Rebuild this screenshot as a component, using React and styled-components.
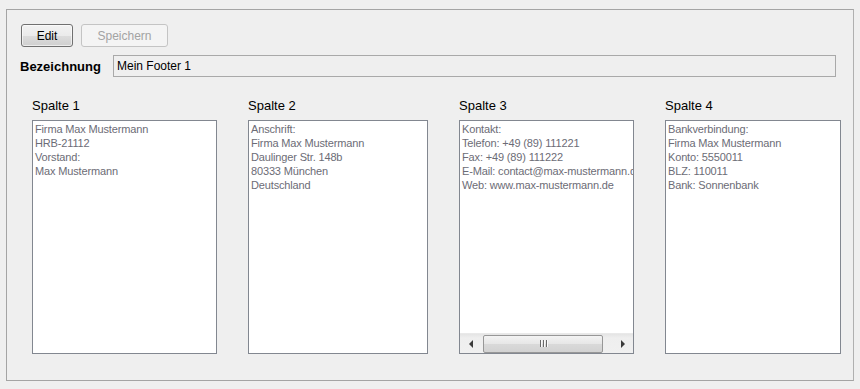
import React from "react";
import styled, { createGlobalStyle } from "styled-components";

const Global = createGlobalStyle`
  html, body { margin: 0; padding: 0; background: #efefef; }
  body { font-family: "Liberation Sans", Arial, sans-serif; }
  * { box-sizing: border-box; }
`;

const Page = styled.div`
  width: 860px;
  height: 389px;
  padding: 9px 6px 0 6px;
  background: #efefef;
`;

const Panel = styled.div`
  width: 848px;
  height: 372px;
  border: 1px solid #a4a4a4;
  border-right-color: #b0b0b0;
  padding: 14px 0 0 13px;
`;

const ButtonRow = styled.div`
  display: flex;
  gap: 8px;
  padding-left: 1px;
`;

const Button = styled.button`
  height: 23px;
  width: ${(p) => p.$w}px;
  padding: 0;
  font-family: "Liberation Sans", Arial, sans-serif;
  font-size: 12px;
  border-radius: 3px;
  border: 1px solid ${(p) => (p.disabled ? "#c4c4c4" : "#707070")};
  color: ${(p) => (p.disabled ? "#a3a3a3" : "#000")};
  background: ${(p) =>
    p.disabled
      ? "#f4f4f4"
      : "linear-gradient(#f2f2f2 0%, #ebebeb 50%, #dddddd 51%, #cfcfcf 100%)"};
  box-shadow: ${(p) => (p.disabled ? "none" : "inset 0 0 0 1px rgba(255,255,255,0.6)")};
`;

const NameRow = styled.div`
  display: flex;
  align-items: center;
  margin-top: 8px;
  height: 22px;
`;

const NameLabel = styled.label`
  width: 93px;
  font-weight: bold;
  font-size: 13px;
  color: #000;
`;

const NameInput = styled.div`
  width: 723px;
  height: 22px;
  border: 1px solid #a9a9a9;
  background: #efefef;
  font-size: 12px;
  line-height: 20px;
  padding-left: 3px;
  color: #000;
`;

const Columns = styled.div`
  display: grid;
  grid-template-columns: 185px 180px 175px 176px;
  column-gap: 31px;
  margin: 21px 0 0 12px;
`;

const Column = styled.div`
  display: flex;
  flex-direction: column;
`;

const ColTitle = styled.div`
  font-size: 13px;
  line-height: 15px;
  color: #000;
  margin-bottom: 7px;
`;

const Box = styled.div`
  height: 234px;
  border: 1px solid #828790;
  background: #fff;
  display: flex;
  flex-direction: column;
`;

const BoxText = styled.div`
  flex: 1;
  overflow: hidden;
  white-space: pre;
  padding: 1px 0 0 2px;
  font-size: 11px;
  line-height: 14px;
  letter-spacing: -0.15px;
  color: #6c6c76;
`;

const HScroll = styled.div`
  height: 20px;
  display: flex;
  align-items: stretch;
  background: linear-gradient(#e4e4e4, #eeeeee 20%, #f0f0f0);
  border-top: 1px solid #e9e9e9;
`;

const ArrowBtn = styled.div`
  width: ${(p) => p.$w}px;
  display: flex;
  align-items: center;
  justify-content: center;
  &::before {
    content: "";
    width: 0;
    height: 0;
    border-top: 4px solid transparent;
    border-bottom: 4px solid transparent;
    ${(p) =>
      p.$dir === "left"
        ? "border-right: 4px solid #3a3a3a;"
        : "border-left: 4px solid #3a3a3a;"}
  }
`;

const Track = styled.div`
  flex: 1;
  display: flex;
  align-items: center;
`;

const Thumb = styled.div`
  margin-left: 1px;
  width: 120px;
  height: 18px;
  border: 1px solid #979797;
  border-radius: 2px;
  background: linear-gradient(#f3f3f3, #e6e6e6 50%, #d9d9d9 51%, #d2d2d2);
  display: flex;
  align-items: center;
  justify-content: center;
  gap: 2px;
`;

const Grip = styled.span`
  width: 1px;
  height: 7px;
  background: #6a6a6a;
  box-shadow: 1px 0 0 #fafafa;
`;

const columns = [
  {
    title: "Spalte 1",
    text: "Firma Max Mustermann\nHRB-21112\nVorstand:\nMax Mustermann",
  },
  {
    title: "Spalte 2",
    text: "Anschrift:\nFirma Max Mustermann\nDaulinger Str. 148b\n80333 München\nDeutschland",
  },
  {
    title: "Spalte 3",
    text:
      "Kontakt:\nTelefon: +49 (89) 111221\nFax: +49 (89) 111222\nE-Mail: contact@max-mustermann.de\nWeb: www.max-mustermann.de",
    scroll: true,
  },
  {
    title: "Spalte 4",
    text: "Bankverbindung:\nFirma Max Mustermann\nKonto: 5550011\nBLZ: 110011\nBank: Sonnenbank",
  },
];

export default function App() {
  return (
    <Page>
      <Global />
      <Panel>
        <ButtonRow>
          <Button $w={52}>Edit</Button>
          <Button $w={87} disabled>
            Speichern
          </Button>
        </ButtonRow>
        <NameRow>
          <NameLabel>Bezeichnung</NameLabel>
          <NameInput>Mein Footer 1</NameInput>
        </NameRow>
        <Columns>
          {columns.map((c) => (
            <Column key={c.title}>
              <ColTitle>{c.title}</ColTitle>
              <Box>
                <BoxText>{c.text}</BoxText>
                {c.scroll && (
                  <HScroll>
                    <ArrowBtn $w={22} $dir="left" />
                    <Track>
                      <Thumb>
                        <Grip />
                        <Grip />
                        <Grip />
                      </Thumb>
                    </Track>
                    <ArrowBtn $w={21} $dir="right" />
                  </HScroll>
                )}
              </Box>
            </Column>
          ))}
        </Columns>
      </Panel>
    </Page>
  );
}
